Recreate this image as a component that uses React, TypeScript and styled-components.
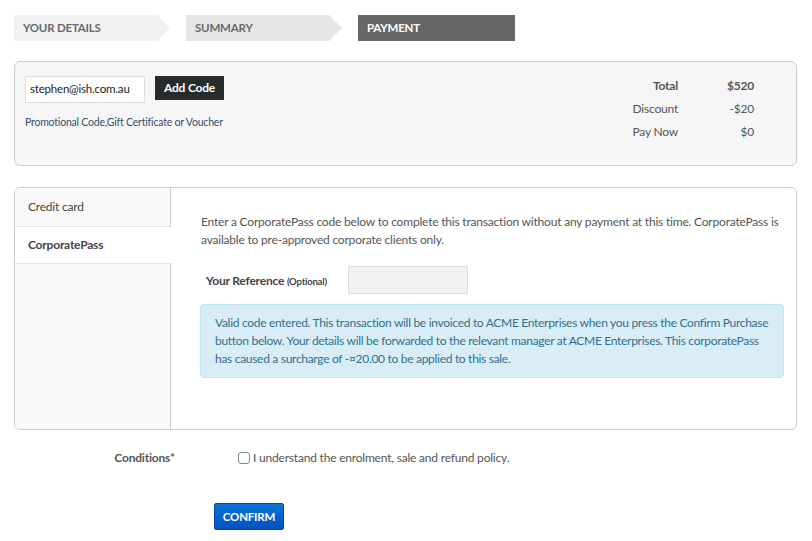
import React from "react";
import styled, { createGlobalStyle } from "styled-components";

const GlobalStyle = createGlobalStyle`
    body {
        margin: 0;
        background: #fff;
        font-family: Lato, "Open Sans", sans-serif;
        letter-spacing: -0.2px;
        color: #555;
    }
    * { box-sizing: border-box; }
`;

const Page = styled.div`
    width: 812px;
    padding: 15px 15px 0 14px;
`;

const Steps = styled.div`
    display: flex;
    gap: 16px;
    margin-bottom: 20px;
`;

const Step = styled.div<{ $state: "done" | "next" | "active" }>`
    width: ${(p) => (p.$state === "active" ? "157px" : "156px")};
    height: 26px;
    display: flex;
    align-items: center;
    padding: 0 0 1px 9px;
    font-size: 11.5px;
    font-weight: 700;
    text-transform: uppercase;
    color: ${(p) => (p.$state === "active" ? "#fff" : "#6a6a6a")};
    background: ${(p) =>
        p.$state === "active" ? "#666" : p.$state === "done" ? "#f2f2f2" : "#e6e6e6"};
    clip-path: ${(p) =>
        p.$state === "active"
            ? "none"
            : "polygon(0 0, 143px 0, 100% 50%, 143px 100%, 0 100%)"};
`;

const Panel = styled.div`
    border: 1px solid #ccc;
    border-radius: 6px;
`;

const PromoPanel = styled(Panel)`
    height: 105px;
    background: #f6f6f6;
    display: flex;
    justify-content: space-between;
    padding: 14px 42px 0 10px;
`;

const PromoLeft = styled.div`
    display: flex;
    flex-direction: column;
`;

const PromoRow = styled.div`
    display: flex;
    gap: 10px;
    align-items: flex-start;
`;

const CodeInput = styled.div`
    width: 120px;
    height: 27px;
    border: 1px solid #ddd;
    background: #fff;
    font-size: 11.5px;
    color: #222;
    padding: 5px 0 0 4px;
`;

const DarkButton = styled.button`
    height: 24px;
    padding: 0 9px 1px;
    border: none;
    background: #262b2d;
    color: #fff;
    font-family: inherit;
    letter-spacing: -0.2px;
    font-size: 12px;
    font-weight: 700;
`;

const PromoLink = styled.a`
    margin-top: 13px;
    font-size: 10.5px;
    color: #34506f;
    text-decoration: none;
`;

const Totals = styled.div`
    display: grid;
    grid-template-columns: auto 76px;
    grid-auto-rows: 23px;
    padding-top: 2px;
    font-size: 12px;
    text-align: right;
`;

const TotalCell = styled.div<{ $bold?: boolean }>`
    font-weight: ${(p) => (p.$bold ? 700 : 400)};
`;

const PaymentPanel = styled(Panel)`
    margin-top: 21px;
    height: 243px;
    display: flex;
    overflow: hidden;
`;

const TabList = styled.div`
    width: 156px;
    flex-shrink: 0;
    background: #fafafa;
    border-right: 1px solid #ccc;
`;

const Tab = styled.div<{ $active?: boolean }>`
    height: ${(p) => (p.$active ? "37px" : "39px")};
    display: flex;
    align-items: center;
    padding: 0 0 1px 13px;
    font-size: 12px;
    font-weight: ${(p) => (p.$active ? 700 : 400)};
    color: #444;
    background: ${(p) => (p.$active ? "#fff" : "#fafafa")};
    border-bottom: 1px solid #e2e2e2;
    margin-right: ${(p) => (p.$active ? "-1px" : "0")};
`;

const TabBody = styled.div`
    flex: 1;
    padding: 25px 12px 0 30px;
`;

const Lead = styled.p`
    margin: 0;
    font-size: 12px;
    line-height: 18px;
    color: #555;
`;

const FieldRow = styled.div`
    display: flex;
    align-items: center;
    margin-top: 17px;
    padding-left: 5px;
`;

const FieldLabel = styled.label`
    width: 142px;
    font-size: 12px;
    font-weight: 700;
    color: #444;
    small {
        font-size: 9.5px;
    }
`;

const RefInput = styled.div`
    width: 120px;
    height: 28px;
    background: #f2f2f2;
    border: 1px solid #ddd;
`;

const InfoAlert = styled.div`
    margin: 10px 0 0 -1px;
    padding: 9px 8px 9px 14px;
    background: #d9edf7;
    border: 1px solid #bce8f1;
    border-radius: 4px;
    color: #31708f;
    font-size: 12px;
    letter-spacing: -0.3px;
    line-height: 18px;
`;

const ConditionsRow = styled.div`
    display: flex;
    align-items: center;
    margin-top: 20px;
`;

const CondLabel = styled.div`
    width: 161px;
    text-align: right;
    font-size: 12px;
    font-weight: 700;
    color: #555;
`;

const CheckLabel = styled.label`
    margin-left: 63px;
    display: flex;
    align-items: center;
    gap: 3px;
    font-size: 12px;
    color: #555;
`;

const Box = styled.span`
    width: 12px;
    height: 12px;
    border: 1px solid #888;
    border-radius: 3px;
    background: #fff;
`;

const ConfirmButton = styled.button`
    margin: 38px 0 0 200px;
    width: 70px;
    height: 27px;
    border: 1px solid #0046a8;
    border-radius: 2px;
    background: linear-gradient(#0a73dc, #0052bf);
    color: #fff;
    font-family: inherit;
    letter-spacing: -0.2px;
    font-size: 11.5px;
    font-weight: 700;
    text-transform: uppercase;
`;

export default function App() {
    return (
        <Page>
            <GlobalStyle />
            <Steps>
                <Step $state="done">Your details</Step>
                <Step $state="next">Summary</Step>
                <Step $state="active">Payment</Step>
            </Steps>

            <PromoPanel>
                <PromoLeft>
                    <PromoRow>
                        <CodeInput>stephen@ish.com.au</CodeInput>
                        <DarkButton>Add Code</DarkButton>
                    </PromoRow>
                    <PromoLink href="#">Promotional Code,Gift Certificate or Voucher</PromoLink>
                </PromoLeft>
                <Totals>
                    <TotalCell $bold>Total</TotalCell>
                    <TotalCell $bold>$520</TotalCell>
                    <TotalCell>Discount</TotalCell>
                    <TotalCell>-$20</TotalCell>
                    <TotalCell>Pay Now</TotalCell>
                    <TotalCell>$0</TotalCell>
                </Totals>
            </PromoPanel>

            <PaymentPanel>
                <TabList>
                    <Tab>Credit card</Tab>
                    <Tab $active>CorporatePass</Tab>
                </TabList>
                <TabBody>
                    <Lead>
                        Enter a CorporatePass code below to complete this transaction without any payment at this time. CorporatePass is available to pre-approved corporate clients only.
                    </Lead>
                    <FieldRow>
                        <FieldLabel>
                            Your Reference <small>(Optional)</small>
                        </FieldLabel>
                        <RefInput />
                    </FieldRow>
                    <InfoAlert>
                        Valid code entered. This transaction will be invoiced to ACME Enterprises when you press the Confirm Purchase button below. Your details will be forwarded to the relevant manager at ACME Enterprises. This corporatePass has caused a surcharge of -¤20.00 to be applied to this sale.
                    </InfoAlert>
                </TabBody>
            </PaymentPanel>

            <ConditionsRow>
                <CondLabel>Conditions*</CondLabel>
                <CheckLabel>
                    <Box />
                    I understand the enrolment, sale and refund policy.
                </CheckLabel>
            </ConditionsRow>

            <ConfirmButton>Confirm</ConfirmButton>
        </Page>
    );
}
